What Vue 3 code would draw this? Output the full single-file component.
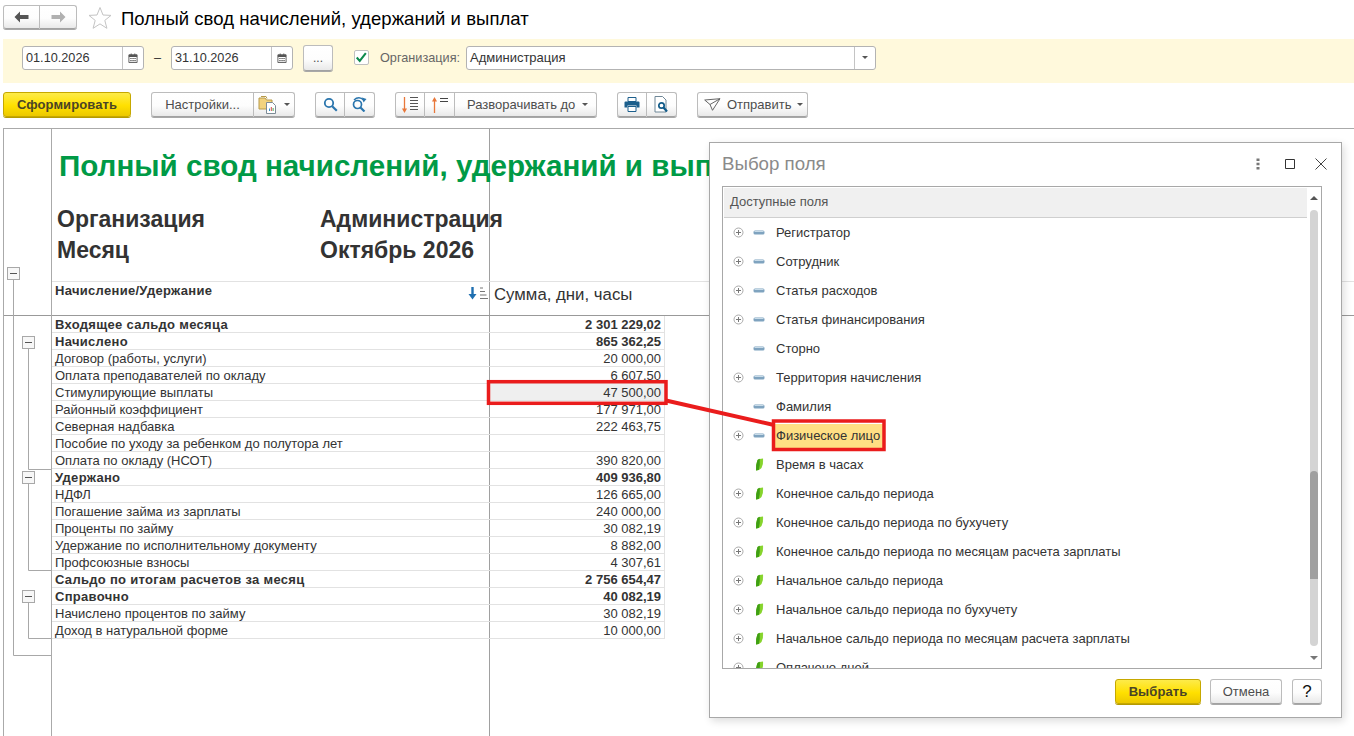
<template>
  <div class="page">
    <header class="titlebar">
      <div class="btn-group nav">
        <button class="btn icon-btn nav-btn">
          <svg width="15" height="12" viewBox="0 0 15 12"><path d="M6 0.5 L0.5 6 L6 11.5 V8 H14.5 V4 H6 Z" fill="#555" /></svg>
        </button>
        <button class="btn icon-btn nav-btn">
          <svg width="15" height="12" viewBox="0 0 15 12"><path d="M9 0.5 L14.5 6 L9 11.5 V8 H0.5 V4 H9 Z" fill="#b0b0b0" /></svg>
        </button>
      </div>
      <svg class="star" width="24" height="24" viewBox="0 0 24 24"><path d="M12 1.5 L15 9 L23 9.4 L16.8 14.4 L18.9 22.3 L12 17.9 L5.1 22.3 L7.2 14.4 L1 9.4 L9 9 Z" fill="#fff" stroke="#c4c4c4" /></svg>
      <h1 class="title">Полный свод начислений, удержаний и выплат</h1>
    </header>

    <section class="filters">
      <div class="field date">
        <span class="value">01.10.2026</span>
        <span class="field-btn"><svg width="10" height="10" viewBox="0 0 11 11"><path d="M1 2h9v8.5H1z" fill="#fff" stroke="#555" /><path d="M1 2h9v2.5H1z M3 0.5h1v2H3z M7 0.5h1v2H7z M2.5 5.5h1.5v1.2H2.5z M4.8 5.5h1.5v1.2H4.8z M7 5.5h1.5v1.2H7z M2.5 7.8h1.5v1.2H2.5z M4.8 7.8h1.5v1.2H4.8z M7 7.8h1.5v1.2H7z" fill="#555" /></svg></span>
      </div>
      <span class="dash">–</span>
      <div class="field date">
        <span class="value">31.10.2026</span>
        <span class="field-btn"><svg width="10" height="10" viewBox="0 0 11 11"><path d="M1 2h9v8.5H1z" fill="#fff" stroke="#555" /><path d="M1 2h9v2.5H1z M3 0.5h1v2H3z M7 0.5h1v2H7z M2.5 5.5h1.5v1.2H2.5z M4.8 5.5h1.5v1.2H4.8z M7 5.5h1.5v1.2H7z M2.5 7.8h1.5v1.2H2.5z M4.8 7.8h1.5v1.2H4.8z M7 7.8h1.5v1.2H7z" fill="#555" /></svg></span>
      </div>
      <button class="btn dots">...</button>
      <span class="checkbox">
        <svg width="15" height="13" viewBox="0 0 15 13"><path d="M2 6.5 L5.5 10.5 L12.5 1.5" fill="none" stroke="#0d8a4c" stroke-width="2.4" /></svg>
      </span>
      <span class="org-label">Организация:</span>
      <div class="field org">
        <span class="value">Администрация</span>
        <span class="field-btn"><i class="caret"></i></span>
      </div>
    </section>

    <nav class="toolbar">
      <button class="btn primary generate">Сформировать</button>

      <div class="btn-group settings">
        <button class="btn text-btn settings-text">Настройки...</button>
        <button class="btn icon-btn settings-menu">
          <svg width="20" height="19" viewBox="0 0 20 19">
            <path d="M1 3h6l1.5 2H14v9H1z" fill="#f2d37e" stroke="#b79a4a" />
            <path d="M3 1.5h5l1 2" fill="none" stroke="#b79a4a" />
            <path d="M8.5 7.5h6l3 3v8h-9z" fill="#fff" stroke="#7c8b96" />
            <path d="M11 16v-2.500h1V16z" fill="#3a8fc7" /><path d="M12.800 16v-4h1V16z" fill="#d14b4b" /><path d="M14.600 16v-3h1V16z" fill="#4da34d" />
          </svg>
          <i class="caret"></i>
        </button>
      </div>

      <div class="btn-group search">
        <button class="btn icon-btn square">
          <svg width="15" height="15" viewBox="0 0 15 15"><circle cx="6" cy="6" r="4.200" fill="none" stroke="#2a75ad" stroke-width="1.800" /><path d="M9.200 9.200 L13.800 13.800" stroke="#2a75ad" stroke-width="2.200" /></svg>
        </button>
        <button class="btn icon-btn square">
          <svg width="17" height="15" viewBox="0 0 17 15"><circle cx="6.500" cy="7.500" r="4" fill="none" stroke="#2a75ad" stroke-width="1.700" /><path d="M9.500 10.500 L13.500 14.500" stroke="#2a75ad" stroke-width="2.200" /><path d="M3 3 C6 0 10 0 12.500 3" fill="none" stroke="#2a75ad" stroke-width="1.400" /><path d="M11 0.500 L15.500 2 L12.500 5.500 Z" fill="#2a75ad" /></svg>
        </button>
      </div>

      <div class="btn-group expand">
        <button class="btn icon-btn square">
          <svg width="18" height="18" viewBox="0 0 18 18"><path d="M3.500 1v14" stroke="#e8773a" stroke-width="1.300" /><path d="M1 12.500 L3.500 17 L6 12.500 Z" fill="#e8773a" /><path d="M9 1.500h8M9 4.500h8M9 7.500h8M9 10.500h8M9 13.500h8" stroke="#555" /></svg>
        </button>
        <button class="btn icon-btn square">
          <svg width="18" height="18" viewBox="0 0 18 18"><path d="M3.500 17V3" stroke="#e8773a" stroke-width="1.300" /><path d="M1 5.500 L3.500 1 L6 5.500 Z" fill="#e8773a" /><path d="M9 2.500h8M9 5.500h8" stroke="#444" /></svg>
        </button>
        <button class="btn text-btn unfold">Разворачивать до <i class="caret"></i></button>
      </div>

      <div class="btn-group print">
        <button class="btn icon-btn square">
          <svg width="16" height="15" viewBox="0 0 16 15"><path d="M4 0.500h8v4H4z" fill="#fff" stroke="#1c5f8c" /><path d="M1.500 4.500h13a1 1 0 0 1 1 1v5h-3v-2h-9v2h-3v-5a1 1 0 0 1 1-1z" fill="#1c5f8c" /><path d="M4 9.500h8v5H4z" fill="#fff" stroke="#1c5f8c" /></svg>
        </button>
        <button class="btn icon-btn square">
          <svg width="15" height="17" viewBox="0 0 15 17"><path d="M1 0.500h7.500l3.500 3.500v12H1z" fill="#fff" stroke="#6f8797" /><circle cx="7.500" cy="9.500" r="2.700" fill="none" stroke="#125c8a" stroke-width="1.700" /><path d="M9.500 11.500 L13 15.500" stroke="#125c8a" stroke-width="2.200" /></svg>
        </button>
      </div>

      <button class="btn text-btn send">
        <svg width="17" height="13" viewBox="0 0 17 13"><path d="M0.700 2 L16 0.700 L8.500 12.300 L6 6.500 Z M6 6.500 L16 0.700" fill="none" stroke="#666" /></svg>
        Отправить <i class="caret"></i>
      </button>
    </nav>

    <main class="sheet">
      <aside class="gutter">
        <svg class="tree" width="47" height="607" viewBox="0 0 47 607">
          <g fill="none" stroke="#a8a8a8">
            <path d="M0 186.500H47" stroke="#999" />
            <path d="M9.500 150V526.500H47" />
            <path d="M24.500 218V340.500H47" />
            <path d="M24.500 354V441.500H47" />
            <path d="M24.500 473V509.500H47" />
          </g>
          <g v-for="b in treeButtons" :key="b.y">
            <rect :x="b.x - 6" :y="b.y - 6" width="12" height="12" fill="#f7f7f7" stroke="#a8a8a8" />
            <path :d="`M${b.x - 3.5} ${b.y}H${b.x + 3.5}`" stroke="#555" />
          </g>
        </svg>
      </aside>

      <div class="report">
        <div class="report-head">
          <div class="report-title">Полный свод начислений, удержаний и выплат</div>
          <div class="param-row first"><span class="param-name">Организация</span><span>Администрация</span></div>
          <div class="param-row"><span class="param-name">Месяц</span><span>Октябрь 2026</span></div>
        </div>
        <div class="col-head">
          <div class="col-label">
            <span>Начисление/Удержание</span>
            <svg class="sort" width="20" height="15" viewBox="0 0 20 15"><path d="M4.500 1v8" stroke="#1f6fb0" stroke-width="2.400" /><path d="M0.500 8h8L4.500 13.500z" fill="#1f6fb0" /><path d="M12 2h3M12 5.500h5M12 9h6.500M12 12.500h8" stroke="#777" stroke-width="1.200" /></svg>
          </div>
          <div class="col-sum">Сумма, дни, часы</div>
        </div>
        <div v-for="row in rows" :key="row.name" class="row" :class="{ strong: row.bold, picked: row.picked }">
          <div class="cell-name">{{ row.name }}</div>
          <div class="cell-sum">{{ row.sum }}</div>
        </div>
      </div>
    </main>

    <div class="dialog">
      <div class="dialog-head">
        <span class="dialog-title">Выбор поля</span>
        <span class="win-btns">
          <svg width="4" height="12" viewBox="0 0 4 12"><path d="M0.500 0.500h3v2.500h-3zM0.500 4.800h3v2.500h-3zM0.500 9h3v2.500h-3z" fill="#777" /></svg>
          <svg class="win-max" width="10" height="10" viewBox="0 0 10 10"><path d="M0.500 0.500h9v9h-9z" fill="none" stroke="#333" /></svg>
          <svg class="win-close" width="12" height="12" viewBox="0 0 12 12"><path d="M0.500 0.500L11.500 11.500M11.500 0.500L0.500 11.500" stroke="#444" /></svg>
        </span>
      </div>

      <div class="list-box">
        <div class="list">
          <div class="list-head">Доступные поля</div>
          <div v-for="item in fields" :key="item.name" class="list-row">
            <span class="expander">
              <svg v-if="item.tree" width="11" height="11" viewBox="0 0 11 11"><circle cx="5.500" cy="5.500" r="4.500" fill="#fff" stroke="#aaa" /><path d="M3 5.500h5M5.500 3v5" stroke="#777" /></svg>
            </span>
            <span class="kind">
              <svg v-if="item.kind === 'dim'" width="12" height="5" viewBox="0 0 12 5"><rect x="0.500" y="0.500" width="11" height="4" rx="1.500" fill="#7fa3bf" /><rect x="1.500" y="1" width="9" height="1" fill="#c8dbe8" /></svg>
              <svg v-else width="9" height="13" viewBox="0 0 9 13"><path d="M2.500 2 Q4 0.500 8 0.500 Q8.500 6 6.500 10 Q5 12 1 12.500 Q0.500 7 2.500 2 Z" fill="#86d42c" /><path d="M2.500 2 Q3.300 1.100 4.800 0.800 Q5.200 7 3.800 12 Q2.500 12.400 1 12.500 Q0.500 7 2.500 2 Z" fill="#3f9f14" /></svg>
            </span>
            <span class="field-name" :class="{ current: item.current }">{{ item.name }}</span>
          </div>
        </div>
        <div class="scroll">
          <i class="arrow up"></i>
          <div class="track"><div class="thumb"></div></div>
          <i class="arrow down"></i>
        </div>
      </div>

      <div class="dialog-foot">
        <button class="btn primary pick">Выбрать</button>
        <button class="btn text-btn cancel">Отмена</button>
        <button class="btn help">?</button>
      </div>
    </div>

    <svg class="marks" width="1354" height="736" viewBox="0 0 1354 736">
      <g fill="none" stroke="#ea1c1c" stroke-width="3.500">
        <rect x="488.500" y="381.700" width="177.500" height="21.600" />
        <rect x="773.500" y="421" width="110.500" height="28.500" />
        <path d="M666 400.500 L774 425" stroke-width="4" />
      </g>
    </svg>
  </div>
</template>

<script setup>
const treeButtons = [
  { x: 9.5, y: 144.5 },
  { x: 24.5, y: 213.5 },
  { x: 24.5, y: 348.5 },
  { x: 24.5, y: 467.5 }
]

const rows = [
  { name: 'Входящее сальдо месяца', sum: '2 301 229,02', bold: true },
  { name: 'Начислено', sum: '865 362,25', bold: true },
  { name: 'Договор (работы, услуги)', sum: '20 000,00' },
  { name: 'Оплата преподавателей по окладу', sum: '6 607,50' },
  { name: 'Стимулирующие выплаты', sum: '47 500,00', picked: true },
  { name: 'Районный коэффициент', sum: '177 971,00' },
  { name: 'Северная надбавка', sum: '222 463,75' },
  { name: 'Пособие по уходу за ребенком до полутора лет', sum: '' },
  { name: 'Оплата по окладу (НСОТ)', sum: '390 820,00' },
  { name: 'Удержано', sum: '409 936,80', bold: true },
  { name: 'НДФЛ', sum: '126 665,00' },
  { name: 'Погашение займа из зарплаты', sum: '240 000,00' },
  { name: 'Проценты по займу', sum: '30 082,19' },
  { name: 'Удержание по исполнительному документу', sum: '8 882,00' },
  { name: 'Профсоюзные взносы', sum: '4 307,61' },
  { name: 'Сальдо по итогам расчетов за месяц', sum: '2 756 654,47', bold: true },
  { name: 'Справочно', sum: '40 082,19', bold: true },
  { name: 'Начислено процентов по займу', sum: '30 082,19' },
  { name: 'Доход в натуральной форме', sum: '10 000,00' }
]

const fields = [
  { name: 'Регистратор', kind: 'dim', tree: true },
  { name: 'Сотрудник', kind: 'dim', tree: true },
  { name: 'Статья расходов', kind: 'dim', tree: true },
  { name: 'Статья финансирования', kind: 'dim', tree: true },
  { name: 'Сторно', kind: 'dim', tree: false },
  { name: 'Территория начисления', kind: 'dim', tree: true },
  { name: 'Фамилия', kind: 'dim', tree: false },
  { name: 'Физическое лицо', kind: 'dim', tree: true, current: true },
  { name: 'Время в часах', kind: 'res', tree: false },
  { name: 'Конечное сальдо периода', kind: 'res', tree: true },
  { name: 'Конечное сальдо периода по бухучету', kind: 'res', tree: true },
  { name: 'Конечное сальдо периода по месяцам расчета зарплаты', kind: 'res', tree: true },
  { name: 'Начальное сальдо периода', kind: 'res', tree: true },
  { name: 'Начальное сальдо периода по бухучету', kind: 'res', tree: true },
  { name: 'Начальное сальдо периода по месяцам расчета зарплаты', kind: 'res', tree: true },
  { name: 'Оплачено дней', kind: 'res', tree: true }
]
</script>

<style>
html,
body {
  margin: 0;
  background: #fff;
}
</style>

<style scoped>
.page {
  position: relative;
  width: 1354px;
  height: 736px;
  overflow: hidden;
  background: #fff;
  font-family: "Liberation Sans", Arial, sans-serif;
  font-size: 13px;
  color: #333;
}

.btn {
  box-sizing: border-box;
  display: inline-flex;
  align-items: center;
  justify-content: center;
  padding: 0;
  border: 1px solid #bcbcbc;
  border-bottom-color: #a2a2a2;
  border-radius: 3px;
  background: linear-gradient(#ffffff, #fdfdfd 55%, #e9e9e9);
  box-shadow: 0 1px 0 #a8a8a8;
  font-family: inherit;
  font-size: 13px;
  color: #4d4d4d;
}
.btn.primary {
  border-color: #c6a800;
  background: linear-gradient(#fdeb4a, #ffe000 55%, #ecc800);
  box-shadow: 0 1px 0 #b59a00;
  font-weight: bold;
  color: #4a4426;
  letter-spacing: 0.1px;
}
.btn-group {
  display: flex;
}
.btn-group .btn {
  border-radius: 0;
  border-left-width: 0;
}
.btn-group .btn:first-child {
  border-left-width: 1px;
  border-radius: 3px 0 0 3px;
}
.btn-group .btn:last-child {
  border-radius: 0 3px 3px 0;
}
.caret {
  display: inline-block;
  width: 0;
  height: 0;
  border: 3.5px solid transparent;
  border-top: 3.5px solid #555;
  border-bottom: 0;
}

.titlebar {
  display: flex;
  align-items: center;
  height: 39px;
  padding: 0 0 2px 3px;
  box-sizing: border-box;
}
.nav {
  align-self: flex-start;
  margin-top: 5px;
}
.nav-btn {
  width: 37px;
  height: 24px;
}
.star {
  margin: -1px 0 0 11px;
}
.title {
  margin: 0 0 0 9px;
  font-size: 18.5px;
  font-weight: normal;
  color: #000;
  letter-spacing: 0.05px;
}

.filters {
  display: flex;
  align-items: center;
  height: 44px;
  margin-left: 3px;
  padding: 0 0 7px 19px;
  box-sizing: border-box;
  background: #fff9dc;
  font-size: 12.7px;
}
.field {
  display: flex;
  align-items: center;
  box-sizing: border-box;
  height: 24px;
  border: 1px solid #b3b3b3;
  border-radius: 3px;
  background: #fff;
}
.field .value {
  flex: 1;
  padding-left: 3px;
  color: #333;
}
.field-btn {
  display: flex;
  align-items: center;
  justify-content: center;
  width: 20px;
  height: 100%;
  border-left: 1px solid #c4c4c4;
}
.date {
  width: 122px;
}
.dash {
  width: 27px;
  text-align: center;
}
.btn.dots {
  width: 30px;
  height: 26px;
  margin-left: 10px;
  font-size: 12px;
}
.checkbox {
  box-sizing: border-box;
  display: flex;
  align-items: center;
  justify-content: center;
  width: 15px;
  height: 15px;
  margin-left: 21px;
  border: 1px solid #c0c0c0;
  border-radius: 2px;
  background: #fff;
}
.org-label {
  width: 82px;
  margin-left: 11px;
  color: #666;
}
.org {
  width: 410px;
  margin-left: 4px;
  font-size: 13px;
}

.toolbar {
  display: flex;
  align-items: flex-start;
  height: 45px;
  margin-left: 3px;
  padding-top: 9px;
  box-sizing: border-box;
}
.toolbar .btn {
  height: 25px;
}
.generate {
  width: 128px;
}
.settings {
  margin-left: 20px;
}
.settings-text {
  width: 103px;
}
.settings-menu {
  width: 41px;
  gap: 6px;
}
.search {
  margin-left: 20px;
}
.square {
  width: 30px;
}
.expand {
  margin-left: 20px;
}
.unfold {
  justify-content: flex-start;
  width: 142px;
  padding-left: 12px;
  gap: 7px;
}
.print {
  margin-left: 20px;
}
.send {
  justify-content: flex-start;
  width: 111px;
  margin-left: 20px;
  padding-left: 6px;
  gap: 6px;
}

.sheet {
  display: flex;
  margin-left: 3px;
  height: 608px;
  border-top: 1px solid #aaa;
}
.gutter {
  box-sizing: border-box;
  width: 49px;
  border-left: 1px solid #aaa;
  border-right: 1px solid #aaa;
}
.tree {
  display: block;
}
.report {
  flex: 1;
  background: linear-gradient(#a0a0a0, #a0a0a0) 437px 0 / 1px 100% no-repeat;
}
.report-head {
  box-sizing: border-box;
  height: 152px;
  white-space: nowrap;
}
.report-title {
  padding: 19px 0 0 7px;
  font-size: 29.6px;
  line-height: 36px;
  font-weight: bold;
  color: #009a46;
}
.param-row {
  display: flex;
  padding-left: 5px;
  font-size: 23px;
  line-height: 31px;
  font-weight: bold;
  color: #333;
}
.param-row.first {
  margin-top: 20px;
}
.param-name {
  width: 263px;
}
.col-head {
  display: flex;
  box-sizing: border-box;
  height: 35px;
  border-top: 1px solid #e2e2e2;
  border-bottom: 1px solid #999;
}
.col-label {
  position: relative;
  box-sizing: border-box;
  width: 438px;
  padding: 1px 0 0 3px;
  font-weight: bold;
  letter-spacing: 0.3px;
}
.sort {
  position: absolute;
  right: 2px;
  top: 4px;
}
.col-sum {
  padding: 4px 0 0 4px;
  font-size: 16.8px;
  line-height: 18px;
}
.row {
  display: flex;
  box-sizing: border-box;
  width: 613px;
  height: 17px;
  line-height: 17px;
  border-bottom: 1px solid #e2e2e2;
}
.row.strong {
  font-weight: bold;
}
.row.strong .cell-name {
  letter-spacing: 0.3px;
}
.cell-name {
  box-sizing: border-box;
  width: 438px;
  padding-left: 3px;
}
.cell-sum {
  box-sizing: border-box;
  width: 175px;
  padding-right: 3px;
  text-align: right;
  border-right: 1px solid #e2e2e2;
}
.row.picked .cell-sum {
  background: #efefef;
}

.dialog {
  position: absolute;
  left: 709px;
  top: 142px;
  box-sizing: border-box;
  width: 633px;
  height: 576px;
  padding: 0 19px 0 12px;
  border: 1px solid #a8a8a8;
  background: #fff;
  box-shadow: 2px 3px 8px rgba(0, 0, 0, 0.14);
}
.dialog-head {
  display: flex;
  align-items: center;
  justify-content: space-between;
  box-sizing: border-box;
  height: 43px;
  padding-bottom: 2px;
}
.dialog-title {
  font-size: 18.7px;
  color: #8a8a8a;
}
.win-btns {
  display: flex;
  align-items: center;
  margin-right: -5px;
}
.win-max {
  margin-left: 25px;
}
.win-close {
  margin-left: 20px;
}
.list-box {
  display: flex;
  box-sizing: border-box;
  height: 483px;
  padding: 1px 3px 0 1px;
  border: 1px solid #a8a8a8;
}
.list {
  flex: 1;
  overflow: hidden;
}
.list-head {
  box-sizing: border-box;
  height: 30px;
  padding-left: 6px;
  line-height: 27px;
  background: #f0f0f0;
  border-bottom: 1px solid #cfcfcf;
  color: #555;
}
.list-row {
  display: flex;
  align-items: center;
  height: 29px;
}
.expander {
  display: flex;
  justify-content: center;
  width: 11px;
  margin-left: 9px;
}
.kind {
  display: flex;
  justify-content: center;
  width: 12px;
  margin-left: 9px;
}
.field-name {
  margin-left: 10px;
  padding: 0 1px;
  line-height: 16px;
}
.field-name.current {
  padding: 4px 3px 4px 1px;
  background: #ffdf84;
}
.scroll {
  display: flex;
  flex-direction: column;
  align-items: center;
  width: 8px;
  margin-left: 3px;
}
.arrow {
  flex: none;
  width: 0;
  height: 0;
  border: 4px solid transparent;
}
.arrow.up {
  border-top: 0;
  border-bottom: 4px solid #555;
  margin: 8px 0 10px;
}
.arrow.down {
  border-bottom: 0;
  border-top: 4px solid #777;
  margin: 10px 0 8px;
}
.track {
  flex: 1;
  width: 8px;
  border-radius: 4px;
  padding-top: 261px;
  box-sizing: border-box;
  background: #d4d4d4;
}
.thumb {
  height: 108px;
  border-radius: 4px 4px 0 0;
  background: #a0a0a0;
}
.dialog-foot {
  display: flex;
  justify-content: flex-end;
  gap: 10px;
  padding-top: 10px;
}
.dialog-foot .btn {
  height: 25px;
}
.pick {
  width: 86px;
  margin-right: -1px;
}
.btn.cancel {
  width: 72px;
}
.btn.help {
  width: 30px;
  font-size: 17px;
  color: #111;
}

.marks {
  position: absolute;
  left: 0;
  top: 0;
  pointer-events: none;
}
</style>
